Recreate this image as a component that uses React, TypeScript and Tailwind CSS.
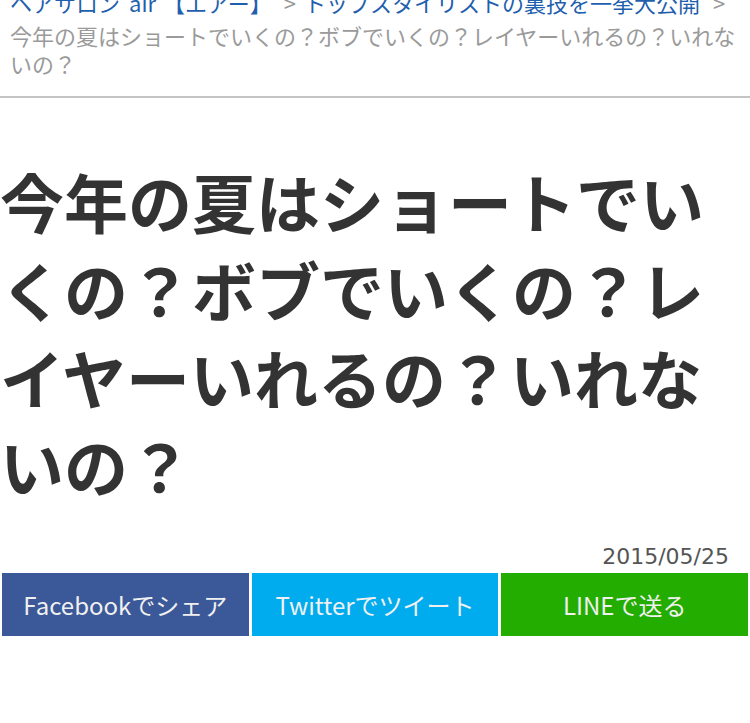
import React from "react";

const jp = { fontFamily: '"Noto Sans CJK JP", "Noto Sans", sans-serif' };

export default function App() {
  return (
    <div className="flex flex-col w-[750px] bg-white" style={jp}>
      <div className="-mt-[11px] px-[10px] pb-[19px] text-[22px] border-b-2 border-[#c4c4c4]">
        <div className="flex items-baseline whitespace-nowrap leading-[27px]">
          <span className="text-[#1f5fae]">ヘアサロン</span>
          <span className="text-[#1f5fae] ml-[9px]">air</span>
          <span className="text-[#1f5fae] ml-[7px]">【エアー】</span>
          <span className="text-[#999999] ml-[12px]">&gt;</span>
          <span className="text-[#1f5fae] ml-[8px]">トップスタイリストの裏技を一挙大公開</span>
          <span className="text-[#999999] ml-[13px]">&gt;</span>
        </div>
        <div className="mt-[5px] leading-[28px] text-[#9a9a9a]">
          今年の夏はショートでいくの？ボブでいくの？レイヤーいれるの？いれないの？
        </div>
      </div>
      <h1 className="mt-[58px] text-[64px] leading-[88px] font-bold text-[#333333]">
        今年の夏はショートでいくの？ボブでいくの？レイヤーいれるの？いれないの？
      </h1>
      <div
        className="mt-[34px] pr-[21px] text-right text-[22px] leading-[30px] text-[#555555]"
        style={{ fontFamily: '"DejaVu Sans", sans-serif' }}
      >
        2015/05/25
      </div>
      <div className="grid grid-cols-3 gap-[3px] px-[2px] mt-[1px]">
        <div className="h-[63px] bg-[#3b5998] flex items-center justify-center text-[24px] text-[#f0f0f0]">
          Facebookでシェア
        </div>
        <div className="h-[63px] bg-[#00aced] flex items-center justify-center text-[24px] text-[#f0f0f0]">
          Twitterでツイート
        </div>
        <div className="h-[63px] bg-[#23ad00] flex items-center justify-center text-[24px] text-[#f0f0f0]">
          LINEで送る
        </div>
      </div>
      <div className="h-[88px]" />
    </div>
  );
}
